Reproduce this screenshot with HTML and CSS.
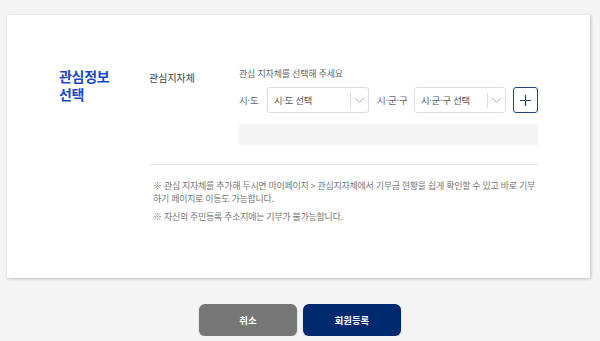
FILE: index.html
```html
<!DOCTYPE html>
<html lang="ko">
<head>
<meta charset="utf-8">
<link rel="stylesheet" href="styles.css">
</head>
<body>
<div class="page">
  <section class="card">
    <div class="section">
      <h2 class="sec-title">관심정보<br>선택</h2>
      <div class="sec-body">
        <div class="field">
          <div class="label">관심지자체</div>
          <div class="control">
            <p class="hint">관심 지자체를 선택해 주세요</p>
            <div class="select-row">
              <span class="sel-label lbl-sido">시·도</span>
              <div class="select sel-sido">
                <span class="sel-text">시·도 선택</span>
                <span class="sel-arrow"><svg width="9" height="5" viewBox="0 0 9 5"><path d="M0.5 0.5l4 4 4-4" fill="none" stroke="#aaa" stroke-width="0.9"/></svg></span>
              </div>
              <span class="sel-label lbl-sigungu">시·군·구</span>
              <div class="select sel-sigungu">
                <span class="sel-text">시·군·구 선택</span>
                <span class="sel-arrow"><svg width="9" height="5" viewBox="0 0 9 5"><path d="M0.5 0.5l4 4 4-4" fill="none" stroke="#aaa" stroke-width="0.9"/></svg></span>
              </div>
              <button class="add-btn" type="button"><svg width="11" height="11" viewBox="0 0 11 11"><path d="M5.5 0v11M0 5.5h11" stroke="#1f3a78" stroke-width="1.2"/></svg></button>
            </div>
            <div class="selected-box"></div>
          </div>
        </div>
        <div class="notes">
          <p>※ 관심 지자체를 추가해 두시면 마이페이지 &gt; 관심지자체에서 기부금 현황을 쉽게 확인할 수 있고 바로 기부하기 페이지로 이동도 가능합니다.</p>
          <p>※ 자신의 주민등록 주소지에는 기부가 불가능합니다.</p>
        </div>
      </div>
    </div>
  </section>
  <div class="actions">
    <button class="btn btn-cancel" type="button">취소</button>
    <button class="btn btn-submit" type="button">회원등록</button>
  </div>
</div>
</body>
</html>
```

FILE: styles.css
```css
* { box-sizing: border-box; }
html, body { margin: 0; padding: 0; }
body {
  background: #f4f4f4;
  font-family: "Noto Sans CJK KR", "Noto Sans", sans-serif;
  color: #333;
}
.page { padding: 15px 10px 0 7px; }
.card {
  background: #fff;
  height: 263px;
  box-shadow: 1px 1px 3px rgba(0,0,0,0.22);
  padding: 52px 52px 0 52px;
}
.section { display: flex; }
.sec-title {
  margin: 0;
  width: 90px;
  flex-shrink: 0;
  font-size: 14px;
  line-height: 18px;
  font-weight: 700;
  letter-spacing: -0.3px;
  color: #1a47cc;
}
.sec-body { flex: 1; }
.field { display: flex; }
.label {
  width: 90px;
  flex-shrink: 0;
  white-space: nowrap;
  font-size: 10px;
  line-height: 14px;
  padding-top: 4px;
  color: #444;
}
.control { flex: 1; }
.hint {
  margin: 0;
  white-space: nowrap;
  font-size: 9px;
  line-height: 13px;
  letter-spacing: -0.2px;
  color: #666;
}
.select-row {
  display: flex;
  align-items: center;
  margin-top: 7px;
  height: 26px;
}
.sel-label {
  flex-shrink: 0;
  white-space: nowrap;
  font-size: 9.5px;
  letter-spacing: -0.2px;
  color: #666;
}
.lbl-sido { width: 28px; }
.lbl-sigungu { width: 37px; }
.select {
  flex-shrink: 0;
  display: flex;
  align-items: center;
  height: 26px;
  border: 1px solid #dcdcdc;
  border-radius: 3px;
}
.sel-sido { width: 102px; margin-right: 8px; }
.sel-sigungu { width: 92px; margin-right: 7px; }
.sel-text {
  flex: 1;
  white-space: nowrap;
  font-size: 9.3px;
  letter-spacing: -0.2px;
  color: #555;
  padding-left: 6px;
}
.sel-arrow {
  width: 18px;
  height: 15px;
  border-left: 1px solid #dcdcdc;
  display: flex;
  align-items: center;
  justify-content: center;
}
.add-btn {
  flex-shrink: 0;
  width: 25px;
  height: 26px;
  padding: 0;
  border: 1px solid #2a4080;
  border-radius: 3px;
  background: #fff;
  display: flex;
  align-items: center;
  justify-content: center;
}
.selected-box {
  margin-top: 11px;
  height: 21px;
  background: #f4f4f4;
}
.notes {
  margin-top: 19px;
  border-top: 1px solid #e6e6e6;
  padding: 14px 0 0 4px;
}
.notes p {
  margin: 0 0 5px;
  font-size: 9px;
  line-height: 13px;
  letter-spacing: -0.3px;
  color: #777;
}
.actions {
  display: flex;
  justify-content: center;
  gap: 6px;
  margin-top: 26px;
  padding-left: 3px;
}
.btn {
  width: 98px;
  height: 32px;
  border: none;
  border-radius: 6px;
  color: #fff;
  font-family: inherit;
  font-size: 9.4px;
  font-weight: 700;
  box-shadow: 0 1px 2px rgba(0,0,0,0.2);
}
.btn-cancel { background: #777; }
.btn-submit { background: #002a70; }
```
